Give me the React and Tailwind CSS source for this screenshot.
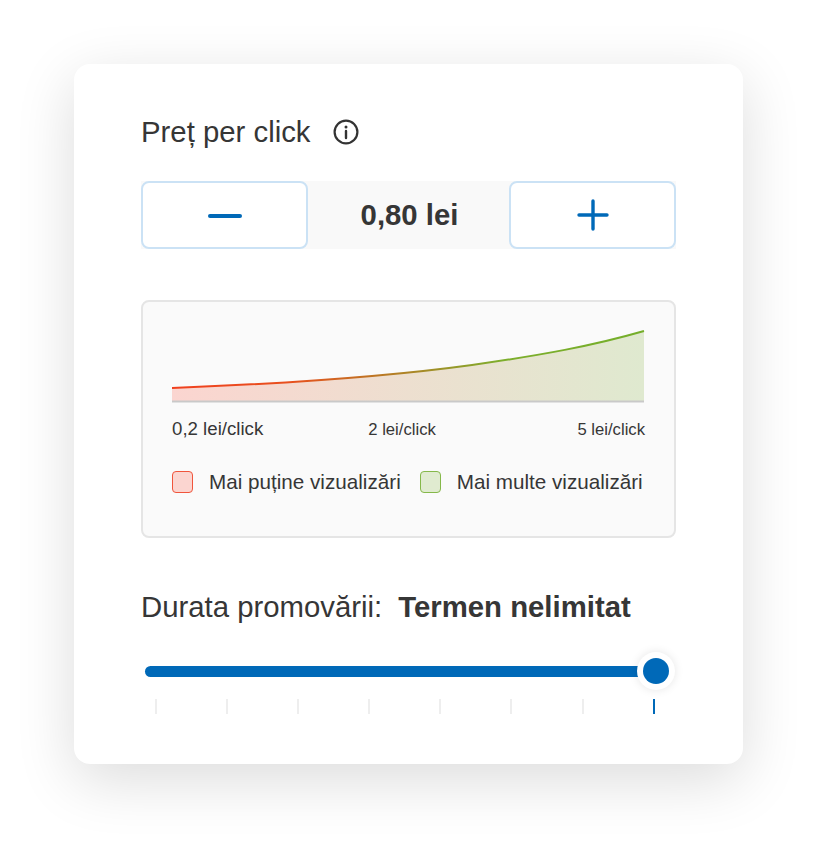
import React from "react";

const ticks = [0, 1, 2, 3, 4, 5, 6, 7];

export default function App() {
  return (
    <div className="w-[816px] h-[847px] bg-white overflow-hidden pt-[64px] pl-[74px] font-['Liberation_Sans',Arial,sans-serif] text-[#363636]">
      <div className="w-[669px] h-[700px] bg-white rounded-[16px] shadow-[0_16px_60px_rgba(0,0,0,0.14)] px-[67px] pt-[50px]">
        <div className="flex items-center h-[36px]">
          <span className="text-[29.33px] leading-[36px]">Preț per click</span>
          <svg className="ml-[22px]" width="26" height="26" viewBox="0 0 26 26" fill="none" stroke="#333333" strokeWidth="2.2">
            <circle cx="13" cy="13" r="11.4" />
            <path d="M13 12v7" strokeLinecap="round" strokeWidth="2.4" />
            <circle cx="13" cy="8" r="1.5" fill="#333333" stroke="none" />
          </svg>
        </div>

        <div className="mt-[31px] flex h-[68px] bg-[#f9f9f9]">
          <div className="w-[167px] bg-white border-2 border-[#cbe2f5] rounded-[8px] flex items-center justify-center">
            <svg className="mt-[2px]" width="36" height="6" viewBox="0 0 36 6">
              <path d="M3 3h30" stroke="#0069b8" strokeWidth="4" strokeLinecap="round" />
            </svg>
          </div>
          <div className="flex-1 flex items-center justify-center text-[29.33px] font-bold pl-[2px]">0,80 lei</div>
          <div className="w-[167px] bg-white border-2 border-[#cbe2f5] rounded-[8px] flex items-center justify-center">
            <svg className="ml-[1px]" width="34" height="34" viewBox="0 0 34 34">
              <path d="M17 3v28M3 17h28" stroke="#0069b8" strokeWidth="3.4" strokeLinecap="round" />
            </svg>
          </div>
        </div>

        <div className="mt-[51px] h-[238px] bg-[#fafafa] border-2 border-[#e5e5e5] rounded-[8px] px-[29px] pt-[27px]">
          <svg className="block" width="473" height="74" viewBox="0 0 473 74">
            <defs>
              <linearGradient id="line" x1="0" x2="1" y1="0" y2="0">
                <stop offset="0" stopColor="#f0401e" />
                <stop offset="0.25" stopColor="#e8501e" />
                <stop offset="0.7" stopColor="#7dae2c" />
                <stop offset="1" stopColor="#74ae2a" />
              </linearGradient>
              <linearGradient id="fill" x1="0" x2="1" y1="0" y2="0">
                <stop offset="0" stopColor="#fbd5d0" />
                <stop offset="1" stopColor="#dfe9cf" />
              </linearGradient>
            </defs>
            <path d="M0 59C130 54 220 47 300 36C370 26 420 17 472 2V72H0Z" fill="url(#fill)" />
            <path d="M0 59C130 54 220 47 300 36C370 26 420 17 472 2" fill="none" stroke="url(#line)" strokeWidth="2" />
            <path d="M0 72.5H472" stroke="#c9c9c9" strokeWidth="2" />
          </svg>

          <div className="mt-[13px] flex items-center h-[26px] w-[473px]">
            <span className="text-[18.67px]">0,2 lei/click</span>
            <span className="ml-[105px] text-[16.67px]">2 lei/click</span>
            <span className="ml-auto text-[16.67px]">5 lei/click</span>
          </div>

          <div className="mt-[28px] flex items-center h-[24px] w-[473px]">
            <span className="w-[21px] h-[22px] rounded-[4px] border border-[#f0553c] bg-[#fbd5d0]" />
            <span className="ml-[16px] pb-[2px] text-[20.67px] whitespace-nowrap">Mai puține vizualizări</span>
            <span className="ml-[19px] w-[21px] h-[22px] rounded-[4px] border border-[#85b84a] bg-[#e0ebd0]" />
            <span className="ml-[16px] pb-[2px] text-[20.67px] whitespace-nowrap">Mai multe vizualizări</span>
          </div>
        </div>

        <div className="mt-[50px] h-[38px] flex items-center text-[29.33px] whitespace-nowrap">
          <span>Durata promovării:</span>
          <span className="ml-[16px] font-bold">Termen nelimitat</span>
        </div>

        <div className="relative mt-[40px] ml-[4px] w-[511px] h-[11px] rounded-full bg-[#0069b8]">
          <div className="absolute left-[492px] top-[-14px] w-[38px] h-[38px] rounded-full bg-white shadow-[0_0_10px_rgba(0,0,0,0.1)] flex items-center justify-center">
            <div className="w-[26px] h-[26px] rounded-full bg-[#0069b8]" />
          </div>
        </div>

        <div className="mt-[22px] ml-[14px] flex gap-[69.1px]">
          {ticks.map((t) => (
            <div key={t} className={t === 7 ? "w-[2px] h-[15px] bg-[#0069b8]" : "w-[2px] h-[15px] bg-[#eeeeee]"} />
          ))}
        </div>
      </div>
    </div>
  );
}
